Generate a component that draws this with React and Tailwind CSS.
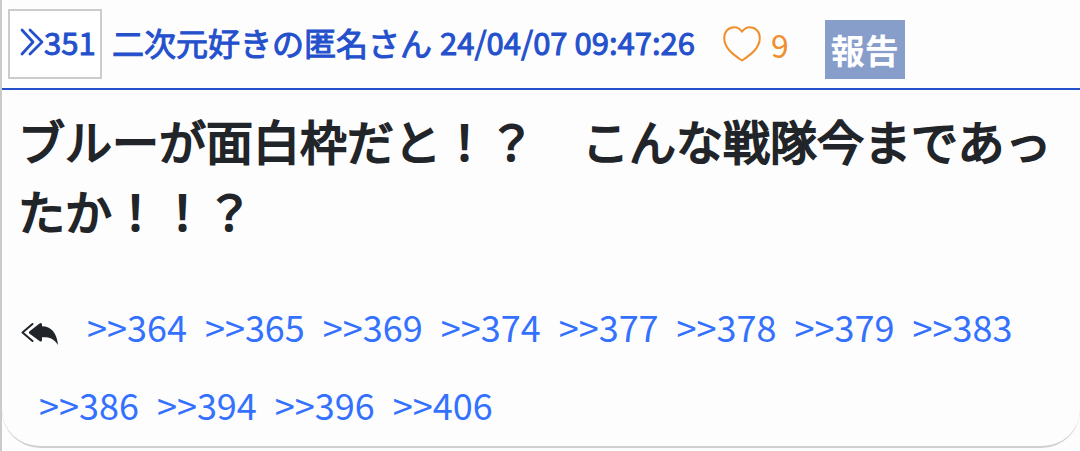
const replies = [364, 365, 369, 374, 377, 378, 379, 383, 386, 394, 396, 406];

function DoubleChevron() {
  return (
    <svg viewBox="0 0 24 28" className="h-7 w-6 shrink-0" fill="none" stroke="currentColor" strokeWidth="2.8" strokeLinecap="round" strokeLinejoin="round" aria-hidden="true">
      <path d="M2 2L13 14L2 26M10 2L22 14L10 26" />
    </svg>
  );
}

function Heart() {
  return (
    <svg viewBox="0 0 38 36" className="h-9 w-[38px]" fill="none" stroke="currentColor" strokeWidth="2" strokeLinejoin="round" aria-hidden="true">
      <path d="M19 5.700C16.800 2.700 14.500 1.300 11.500 1.300C5.500 1.300 1.200 5.500 1.200 12C1.200 22 10 28.500 19 34.500C28 28.500 36.800 22 36.800 12C36.800 5.500 32.500 1.300 26.500 1.300C23.500 1.300 21.200 2.700 19 5.700Z" />
    </svg>
  );
}

function ReplyAll() {
  return (
    <svg viewBox="0 0 38 24" className="h-6 w-[38px]" aria-hidden="true">
      <path d="M11.500 2L1.500 10.500L11.500 19" fill="none" stroke="currentColor" strokeWidth="2" strokeLinecap="round" strokeLinejoin="round" />
      <path d="M8.300 9.600L18.500 1.400Q20.800 0 21 2.500V4.300C30 4.300 36 11 37 23C33 16.500 28.500 15 21 15.200V18Q20.800 20.500 18.500 19L8.300 11.400Q7.300 10.500 8.300 9.600Z" fill="currentColor" />
    </svg>
  );
}

export default function App() {
  return (
    <div className="min-h-screen border-l-2 border-[#cbcbcb] bg-[#fdfdfd] font-['Noto_Sans_CJK_JP',sans-serif] text-[#212529]">
      <article className="rounded-b-[38px] border-b-2 border-[#cfcfcf]">
        <header className="flex h-[90px] items-start border-b-2 border-[#2450cc] pl-1.5 text-[#2450cc]">
          <a href="#351" className="mt-[9px] flex h-[70px] w-[94px] items-center border-2 border-[#cccccc] bg-white pb-1 pl-2.5 text-[31px] leading-10 [-webkit-text-stroke:1px]">
            <DoubleChevron />
            351
          </a>
          <div className="mt-[18px] ml-2.5 flex items-center gap-2 whitespace-nowrap leading-12 [-webkit-text-stroke:1px]">
            <span className="text-[32px]">二次元好きの匿名さん</span>
            <time dateTime="2024-04-07T09:47:26" className="text-[31px]">24/04/07 09:47:26</time>
          </div>
          <button type="button" aria-label="いいね 9" className="mt-5 ml-7 flex items-center gap-2.5 text-[32px] leading-12 text-[#f08f2d]">
            <Heart />
            9
          </button>
          <button type="button" className="mt-5 ml-9 h-[59px] bg-[#879dca] px-1.5 text-[34px] leading-10 font-bold text-white">
            報告
          </button>
        </header>
        <p className="px-4 pt-[15px] text-[47px] leading-[70px] [-webkit-text-stroke:2px]">
          ブルーが面白枠だと！？　こんな戦隊今まであったか！！？
        </p>
        <nav aria-label="返信" className="flex flex-wrap items-center px-[19px] pt-[42px] pb-[3px] text-[36px] leading-[78px] text-[#3471ff]">
          <span className="mr-2.5 pt-4 text-[#212529]">
            <ReplyAll />
          </span>
          {replies.map((n) => (
            <a key={n} href={`#${n}`} className="ml-[18px]">
              &gt;&gt;{n}
            </a>
          ))}
        </nav>
      </article>
    </div>
  );
}
